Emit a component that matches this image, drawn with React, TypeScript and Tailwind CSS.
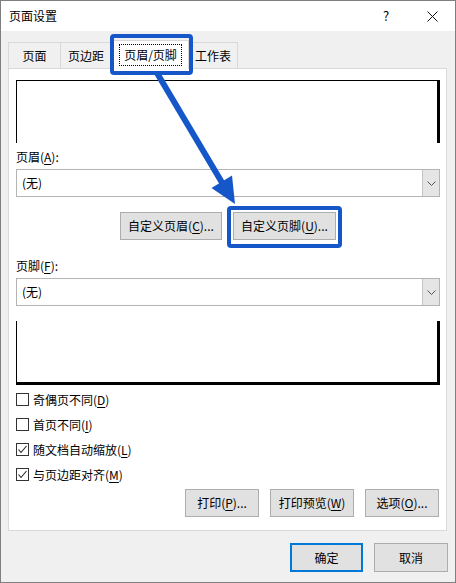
import React from 'react';

const font = { fontFamily: '"Noto Sans CJK SC", "Noto Sans", sans-serif' };

function U({ children }: { children: React.ReactNode }) {
  return <span className="underline underline-offset-2">{children}</span>;
}

function Btn({ children, className = '' }: { children: React.ReactNode; className?: string }) {
  return (
    <div
      className={`h-[28px] flex items-center justify-center bg-[#e1e1e1] border border-[#adadad] text-[12px] ${className}`}
    >
      {children}
    </div>
  );
}

function Combo() {
  return (
    <div className="h-[28px] flex border border-[#b4b4b4] bg-white">
      <div className="flex-1 flex items-center pl-[5px] text-[12px]">(无)</div>
      <div className="w-[17px] bg-[#e5e5e5] border-l border-[#c4c4c4] flex items-center justify-center">
        <svg width="9" height="5" viewBox="0 0 9 5">
          <polyline points="0.5,0.5 4.5,4.5 8.5,0.5" fill="none" stroke="#555" strokeWidth="1" />
        </svg>
      </div>
    </div>
  );
}

function Check({ checked, children }: { checked?: boolean; children: React.ReactNode }) {
  return (
    <div className="h-[25px] flex items-center gap-[4px] text-[12px]">
      <div className="w-[13px] h-[13px] border border-[#333] bg-white flex items-center justify-center">
        {checked && (
          <svg width="11" height="11" viewBox="0 0 11 11">
            <polyline points="1.5,5.5 4,8.5 9.5,2" fill="none" stroke="#222" strokeWidth="1.1" />
          </svg>
        )}
      </div>
      <span>{children}</span>
    </div>
  );
}

export default function App() {
  return (
    <div style={font} className="relative w-[456px] h-[583px] border border-[#7f7f7f] bg-[#f0f0f0] text-black overflow-hidden">
      {/* title bar */}
      <div className="h-[30px] bg-white flex items-center pl-[8px] text-[12px]">
        <span className="flex-1">页面设置</span>
        <span className="w-[20px] text-center mr-[30px] text-[13px]">?</span>
        <div className="w-[12px] h-[12px] mr-[17px] flex items-center justify-center">
          <svg width="11" height="11" viewBox="0 0 11 11">
            <line x1="0.5" y1="0.5" x2="10.5" y2="10.5" stroke="#111" strokeWidth="1" />
            <line x1="10.5" y1="0.5" x2="0.5" y2="10.5" stroke="#111" strokeWidth="1" />
          </svg>
        </div>
      </div>

      <div className="pl-[7px] pr-[8px] pt-[11px]">
        {/* tabs */}
        <div className="h-[26px] flex items-end text-[12px] relative z-10">
          <div className="w-[53px] h-[26px] border border-b-0 border-[#d9d9d9] flex items-center justify-center">页面</div>
          <div className="w-[51px] h-[26px] border-t border-r border-[#d9d9d9] flex items-center justify-center">页边距</div>
          <div className="w-[77px] h-[29px] -mb-[1px] bg-white border border-b-0 border-[#d9d9d9] flex items-center justify-center">
            <div className="border border-dotted border-black px-[4px] h-[22px] flex items-center">页眉/页脚</div>
          </div>
          <div className="w-[49px] h-[26px] border-t border-r border-[#d9d9d9] flex items-center justify-center">工作表</div>
        </div>

        {/* panel */}
        <div className="h-[463px] bg-white border border-[#d9d9d9] pl-[7px] pr-[6px] pt-[11px]">
          <div className="h-[63px] border-t border-l border-black border-r-[3px]" />
          <div className="mt-[5px] h-[18px] leading-[18px] text-[12px]">
            页眉(<U>A</U>):
          </div>
          <div className="mt-[3px]">
            <Combo />
          </div>
          <div className="mt-[15px] flex justify-center gap-[11px]">
            <Btn className="w-[102px]">
              自定义页眉(<U>C</U>)...
            </Btn>
            <Btn className="w-[103px]">
              自定义页脚(<U>U</U>)...
            </Btn>
          </div>
          <div className="mt-[17px] h-[18px] leading-[18px] text-[12px]">
            页脚(<U>F</U>):
          </div>
          <div className="mt-[3px]">
            <Combo />
          </div>
          <div className="mt-[15px] h-[64px] border-l border-black border-r-[3px] border-b-[3px]" />
          <div className="mt-[2px]">
            <Check>奇偶页不同(<U>D</U>)</Check>
            <Check>首页不同(<U>I</U>)</Check>
            <Check checked>随文档自动缩放(<U>L</U>)</Check>
            <Check checked>与页边距对齐(<U>M</U>)</Check>
          </div>
          <div className="mt-[2px] flex justify-end gap-[11px] pr-[1px]">
            <Btn className="w-[74px]">
              打印(<U>P</U>)...
            </Btn>
            <Btn className="w-[84px]">
              打印预览(<U>W</U>)
            </Btn>
            <Btn className="w-[74px]">
              选项(<U>O</U>)...
            </Btn>
          </div>
        </div>

        {/* dialog buttons */}
        <div className="mt-[12px] flex justify-end gap-[11px] -mr-[1px]">
          <div className="w-[73px] h-[29px] flex items-center justify-center bg-[#e1e1e1] border-2 border-[#0078d7] text-[12px]">
            确定
          </div>
          <Btn className="w-[74px] h-[29px]">取消</Btn>
        </div>
      </div>

      {/* annotation overlays */}
      <div className="absolute left-[109px] top-[33px] w-[83px] h-[41px] border-[4px] border-[#1556c8] rounded-[4px] z-20" />
      <div className="absolute left-[226px] top-[205px] w-[115px] h-[42px] border-[4px] border-[#1556c8] rounded-[4px] z-20" />
      <svg className="absolute -left-px -top-px z-20 pointer-events-none" width="456" height="583" viewBox="0 0 456 583">
        <line x1="157" y1="73" x2="224" y2="186" stroke="#1556c8" strokeWidth="6" />
        <polygon points="235,204 232,175.5 211.5,188" fill="#1556c8" />
      </svg>
    </div>
  );
}
